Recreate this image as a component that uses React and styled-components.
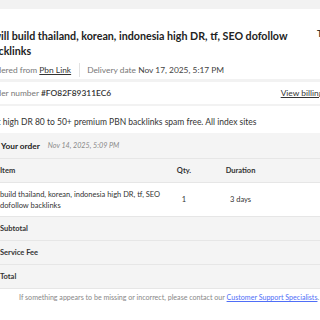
import styled, { createGlobalStyle } from 'styled-components'

const GlobalStyle = createGlobalStyle`
  html, body {
    margin: 0;
    padding: 0;
    background: #fff;
    overflow: hidden;
  }
  body {
    font-family: Lato, "Liberation Sans", Arial, sans-serif;
    color: #222;
  }
`

const Page = styled.div`
  background: #f2f2f2;
  padding-top: 9px;
  margin-left: -20px;
  width: 420px;
`

const Card = styled.div`
  background: #fff;
  padding: 19px 0 2px 7px;
`

const Header = styled.div`
  display: flex;
  align-items: flex-start;
  gap: 10px;
`

const Title = styled.h1`
  margin: 0;
  width: 320px;
  font-size: 10.7px;
  line-height: 15px;
  font-weight: 700;
  color: #222;
`

const Side = styled.div`
  font-size: 9.5px;
  font-weight: 700;
  color: #333;
  white-space: nowrap;
`

const Meta = styled.div`
  display: flex;
  align-items: center;
  margin-top: 5px;
  font-size: 8.4px;
  line-height: 14px;
  color: #777;
`

const MetaPart = styled.span`
  padding-right: ${p => (p.$first ? '8px' : '0')};
  padding-left: ${p => (p.$first ? '0' : '7px')};
  border-right: ${p => (p.$first ? '1px solid #e2e2e2' : 'none')};
  strong {
    font-weight: 400;
    color: #444;
  }
  a {
    color: #333;
    text-decoration: underline;
  }
`

const Row = styled.div`
  display: flex;
  align-items: center;
  justify-content: space-between;
  background: #fff;
  margin-top: ${p => p.$gap || '0'};
  height: ${p => p.$h};
  padding: ${p => p.$top || '0'} 51px 0 7px;
  box-sizing: border-box;
  font-size: ${p => p.$size || '8.4px'};
  color: #777;
  strong {
    color: #333;
    font-weight: 600;
  }
  a {
    color: #333;
    text-decoration: underline;
  }
`

const Desc = styled.span`
  color: #333;
`

const Table = styled.div`
  background: #fff;
`

const OrderHead = styled.div`
  display: flex;
  align-items: center;
  gap: 8px;
  height: 25px;
  padding-left: 21px;
  background: #f4f4f4;
  border-bottom: 1px solid #e6e6e6;
  h2 {
    margin: 0;
    font-size: 8.3px;
    font-weight: 700;
    color: #222;
  }
  em {
    font-size: 7.2px;
    color: #888;
  }
`

const Grid = styled.div`
  display: grid;
  grid-template-columns: 185px 38px 75px 1fr;
  align-items: center;
  min-height: ${p => p.$h};
  background: ${p => (p.$shade ? '#f4f4f4' : '#fff')};
  border-bottom: 1px solid #e6e6e6;
  font-size: 7.5px;
  line-height: 11px;
  color: #333;
  font-weight: ${p => (p.$bold ? 700 : 400)};
`

const Cell = styled.div`
  padding-left: ${p => (p.$first ? '20px' : '0')};
  text-align: ${p => (p.$first ? 'left' : 'center')};
`

const Footer = styled.p`
  margin: 0;
  background: #fff;
  padding: 4px 0 20px 39px;
  font-size: 7.1px;
  color: #888;
  white-space: nowrap;
  a {
    color: #4f6ef7;
    text-decoration: underline;
  }
`

export default function App() {
  return (
    <>
      <GlobalStyle />
      <Page>
        <Card>
          <Header>
            <Title>I will build thailand, korean, indonesia high DR, tf, SEO dofollow backlinks</Title>
            <Side>Total price</Side>
          </Header>
          <Meta>
            <MetaPart $first>Ordered from <a href="#">Pbn Link</a></MetaPart>
            <MetaPart>Delivery date <strong>Nov 17, 2025, 5:17 PM</strong></MetaPart>
          </Meta>
        </Card>
        <Row $gap="3px" $h="22px">
          <span>Order number <strong>#FO82F89311EC6</strong></span>
          <a href="#">View billing details</a>
        </Row>
        <Row $gap="2px" $h="27px" $top="4px" $size="8.5px">
          <Desc>Get high DR 80 to 50+ premium PBN backlinks spam free. All index sites</Desc>
        </Row>
        <Table>
          <OrderHead>
            <h2>Your order</h2>
            <em>Nov 14, 2025, 5:09 PM</em>
          </OrderHead>
          <Grid $h="23px" $shade $bold>
            <Cell $first>Item</Cell>
            <Cell>Qty.</Cell>
            <Cell>Duration</Cell>
            <Cell />
          </Grid>
          <Grid $h="33px">
            <Cell $first>build thailand, korean, indonesia high DR, tf, SEO dofollow backlinks</Cell>
            <Cell>1</Cell>
            <Cell>3 days</Cell>
            <Cell />
          </Grid>
          <Grid $h="23px" $shade $bold>
            <Cell $first>Subtotal</Cell>
          </Grid>
          <Grid $h="23px" $shade $bold>
            <Cell $first>Service Fee</Cell>
          </Grid>
          <Grid $h="23px" $shade $bold>
            <Cell $first>Total</Cell>
          </Grid>
        </Table>
        <Footer>
          If something appears to be missing or incorrect, please contact our <a href="#">Customer Support Specialists</a>.
        </Footer>
      </Page>
    </>
  )
}
